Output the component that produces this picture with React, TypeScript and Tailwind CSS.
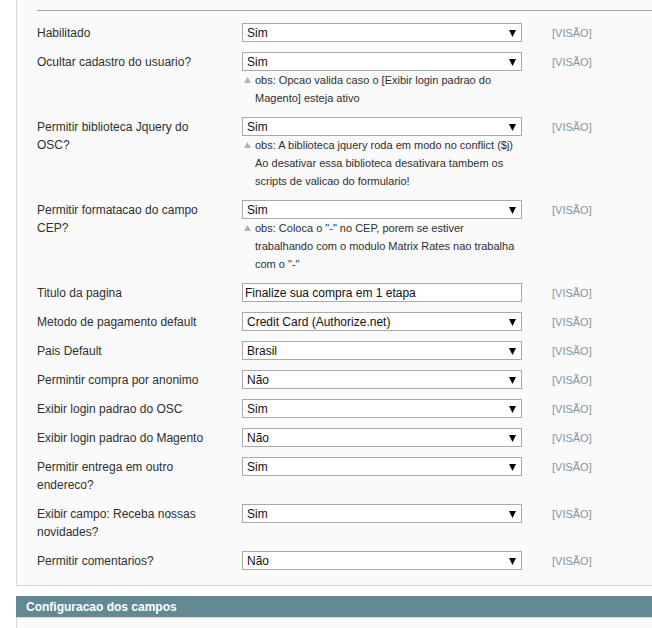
import React from 'react';

interface Field {
  label: string;
  value: string;
  kind?: 'select' | 'text';
  note?: string;
}

const fields: Field[] = [
  { label: 'Habilitado', value: 'Sim' },
  {
    label: 'Ocultar cadastro do usuario?',
    value: 'Sim',
    note: 'obs: Opcao valida caso o [Exibir login padrao do Magento] esteja ativo',
  },
  {
    label: 'Permitir biblioteca Jquery do OSC?',
    value: 'Sim',
    note: 'obs: A biblioteca jquery roda em modo no conflict ($j) Ao desativar essa biblioteca desativara tambem os scripts de valicao do formulario!',
  },
  {
    label: 'Permitir formatacao do campo CEP?',
    value: 'Sim',
    note: 'obs: Coloca o "-" no CEP, porem se estiver trabalhando com o modulo Matrix Rates nao trabalha com o "-"',
  },
  { label: 'Titulo da pagina', value: 'Finalize sua compra em 1 etapa', kind: 'text' },
  { label: 'Metodo de pagamento default', value: 'Credit Card (Authorize.net)' },
  { label: 'Pais Default', value: 'Brasil' },
  { label: 'Permintir compra por anonimo', value: 'Não' },
  { label: 'Exibir login padrao do OSC', value: 'Sim' },
  { label: 'Exibir login padrao do Magento', value: 'Não' },
  { label: 'Permitir entrega em outro endereco?', value: 'Sim' },
  { label: 'Exibir campo: Receba nossas novidades?', value: 'Sim' },
  { label: 'Permitir comentarios?', value: 'Não' },
];

const FakeSelect: React.FC<{ value: string }> = ({ value }) => (
  <div className="relative flex h-[19px] w-[280px] items-center border border-[#aaaaaa] bg-white pl-[4px] text-[12px] text-[#111]">
    <span>{value}</span>
    <svg className="absolute right-[5px] top-[6px]" width="7" height="7" viewBox="0 0 7 7">
      <polygon points="0,0 7,0 3.5,7" fill="#000" />
    </svg>
  </div>
);

const FieldRow: React.FC<{ field: Field }> = ({ field }) => (
  <div className="flex items-start">
    <div className="w-[205px] shrink-0 pb-[5px] pr-[30px] pt-[6px] text-[12px] leading-[18px] text-[#2f2f2f]">
      {field.label}
    </div>
    <div className="w-[280px] shrink-0 py-[5px]">
      {field.kind === 'text' ? (
        <div className="flex h-[19px] w-[280px] items-center border border-[#aaaaaa] bg-white pl-[2px] text-[12px] text-[#111]">
          {field.value}
        </div>
      ) : (
        <FakeSelect value={field.value} />
      )}
      {field.note && (
        <div className="flex text-[11px] leading-[18px] text-[#2f2f2f]">
          <span className="w-[13px] shrink-0 pl-[2px] pt-[6px]">
            <svg width="7" height="6" viewBox="0 0 7 6">
              <polygon points="3.5,0 7,6 0,6" fill="#a6b4bc" />
            </svg>
          </span>
          <span>{field.note}</span>
        </div>
      )}
    </div>
    <div className="ml-[30px] pt-[6px] text-[11px] leading-[18px] text-[#8494a2]">[VISÃO]</div>
  </div>
);

export default function App() {
  return (
    <div className="min-h-[628px] w-[652px] overflow-hidden bg-white pl-[16px] font-['Liberation_Sans',Arial,sans-serif]">
      <div className="border-b border-l border-[#d6d6d6] bg-[#fafafa] pb-[10px] pl-[20px] pt-[10px]">
        <div className="mb-[7px] border-t border-[#a3a3a3]" />
        {fields.map((f) => (
          <FieldRow key={f.label} field={f} />
        ))}
      </div>

      <div className="mt-[10px] flex h-[21px] items-center bg-[#638a92] pl-[10px] text-[12px] font-bold text-white">
        Configuracao dos campos
      </div>
      <div className="h-[20px] border-l border-t border-[#d6d6d6] bg-[#fafafa]" />
    </div>
  );
}
